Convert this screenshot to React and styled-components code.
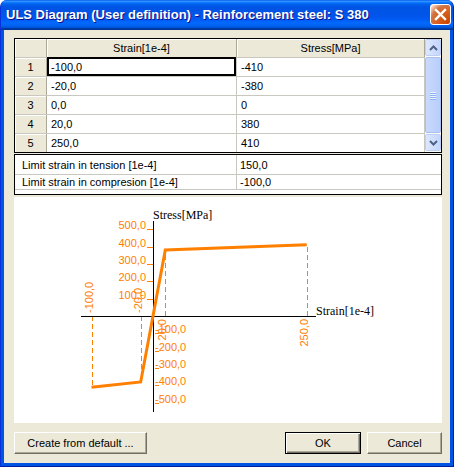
import React from "react";
import styled, { createGlobalStyle } from "styled-components";

const GlobalStyle = createGlobalStyle`
  html, body {
    margin: 0;
    padding: 0;
    background: #ffffff;
  }
  body {
    width: 454px;
    height: 467px;
    overflow: hidden;
    font-family: "Liberation Sans", Arial, sans-serif;
  }
  * {
    box-sizing: border-box;
  }
`;

const rows = [
  { id: 1, strain: "-100,0", stress: "-410" },
  { id: 2, strain: "-20,0", stress: "-380" },
  { id: 3, strain: "0,0", stress: "0" },
  { id: 4, strain: "20,0", stress: "380" },
  { id: 5, strain: "250,0", stress: "410" }
];

const points = [
  [-100, -410],
  [-20, -380],
  [0, 0],
  [20, 380],
  [250, 410]
];

const ORANGE = "#ff8000";
const X0 = 139;
const Y0 = 119;
const SX = 0.615;
const SY = 0.1735;
const px = s => X0 + s * SX;
const py = v => Y0 - v * SY;

const App = () => {
  return (
    <>
      <GlobalStyle />
      <Window>
        <TitleBar>
          <Title>ULS Diagram (User definition) - Reinforcement steel: S 380</Title>
          <CloseButton>
            <svg width="13" height="13" viewBox="0 0 13 13">
              <path d="M2 2 L11 11 M11 2 L2 11" stroke="#fff" strokeWidth="2.4" strokeLinecap="square" />
            </svg>
          </CloseButton>
        </TitleBar>
        <Body>
          <GridFrame>
            <GridTable>
              <GridRow>
                <FixedCell />
                <HeaderCell>Strain[1e-4]</HeaderCell>
                <HeaderCell>Stress[MPa]</HeaderCell>
              </GridRow>
              {rows.map((r, i) => (
                <GridRow key={r.id} last={i === rows.length - 1}>
                  <FixedCell>{r.id}</FixedCell>
                  <DataCell focused={i === 0}>{r.strain}</DataCell>
                  <DataCell>{r.stress}</DataCell>
                </GridRow>
              ))}
            </GridTable>
            <ScrollBar>
              <ScrollButton>
                <svg width="9" height="6" viewBox="0 0 9 6">
                  <polyline points="1,5 4.5,1.5 8,5" fill="none" stroke="#4d6185" strokeWidth="2" />
                </svg>
              </ScrollButton>
              <ScrollThumb>
                <Grip />
                <Grip />
                <Grip />
                <Grip />
              </ScrollThumb>
              <ScrollButton>
                <svg width="9" height="6" viewBox="0 0 9 6">
                  <polyline points="1,1 4.5,4.5 8,1" fill="none" stroke="#4d6185" strokeWidth="2" />
                </svg>
              </ScrollButton>
            </ScrollBar>
          </GridFrame>

          <LimitBox>
            <LimitRow h={19}>
              <LimitLabel>Limit strain in tension [1e-4]</LimitLabel>
              <LimitValue>150,0</LimitValue>
            </LimitRow>
            <LimitRow h={14}>
              <LimitLabel>Limit strain in compresion [1e-4]</LimitLabel>
              <LimitValue>-100,0</LimitValue>
            </LimitRow>
          </LimitBox>

          <ChartArea>
            <svg width="428" height="226" viewBox="0 0 428 226">
              {/* dashed projections */}
              {points
                .filter(p => p[0] !== 0)
                .map(([s, v]) => (
                  <line
                    key={`d${s}`}
                    x1={Math.round(px(s)) + 0.5}
                    y1={Y0}
                    x2={Math.round(px(s)) + 0.5}
                    y2={py(v)}
                    stroke={ORANGE}
                    strokeWidth="1"
                    strokeDasharray="5 3"
                  />
                ))}

              {/* axes */}
              <line x1="67" y1={Y0 + 0.5} x2="302" y2={Y0 + 0.5} stroke="#000" strokeWidth="1" />
              <line x1={X0 + 0.5} y1="24" x2={X0 + 0.5} y2="215" stroke="#000" strokeWidth="1" />
              <AxisText x={X0} y="22">Stress[MPa]</AxisText>
              <AxisText x="302" y="118">Strain[1e-4]</AxisText>

              {/* stress ticks */}
              {[100, 200, 300, 400, 500].map(v => (
                <g key={`p${v}`}>
                  <line
                    x1={X0 - 6}
                    y1={Math.round(py(v)) + 0.5}
                    x2={X0}
                    y2={Math.round(py(v)) + 0.5}
                    stroke={ORANGE}
                  />
                  <TickText x={X0 - 7} y={Math.round(py(v))} textAnchor="end">
                    {`${v},0`}
                  </TickText>
                </g>
              ))}
              {[100, 200, 300, 400, 500].map(v => (
                <g key={`n${v}`}>
                  <line
                    x1={X0 + 2}
                    y1={Math.round(py(-v)) + 0.5}
                    x2={X0 + 6}
                    y2={Math.round(py(-v)) + 0.5}
                    stroke={ORANGE}
                  />
                  <TickText x={X0 + 2} y={Math.round(py(-v))}>
                    {`-${v},0`}
                  </TickText>
                </g>
              ))}

              {/* strain labels */}
              {points
                .filter(p => p[0] !== 0)
                .map(([s]) => (
                  <TickText
                    key={`s${s}`}
                    transform={`translate(${Math.round(px(s)) + 1} ${s < 0 ? Y0 - 3 : Y0 + 3}) rotate(-90)`}
                    textAnchor={s < 0 ? "start" : "end"}
                  >
                    {`${s},0`}
                  </TickText>
                ))}

              {/* diagram */}
              <polyline
                points={points.map(([s, v]) => `${px(s)},${py(v)}`).join(" ")}
                fill="none"
                stroke={ORANGE}
                strokeWidth="3"
              />
            </svg>
          </ChartArea>

          <ButtonBar>
            <Button width={133}>Create from default ...</Button>
            <Spacer />
            <Button width={76} primary>
              OK
            </Button>
            <Button width={75}>Cancel</Button>
          </ButtonBar>
        </Body>
      </Window>
    </>
  );
};

const Window = styled.div`
  width: 454px;
  height: 467px;
  display: flex;
  flex-direction: column;
  background: #0054e3;
  border-left: 1px solid #0831d9;
  border-right: 1px solid #001ea0;
  border-bottom: 1px solid #001ea0;
  border-radius: 7px 7px 0 0;
  overflow: hidden;
`;

const TitleBar = styled.div`
  height: 30px;
  flex: none;
  display: flex;
  align-items: center;
  justify-content: space-between;
  padding: 0 3px 1px 6px;
  margin: 0 -1px;
  background: linear-gradient(
    to bottom,
    #0058ee 0%,
    #3593ff 4%,
    #288eff 6%,
    #127dff 8%,
    #036ffc 10%,
    #0262ee 14%,
    #0057e5 20%,
    #0054e3 24%,
    #0055eb 56%,
    #005bf5 66%,
    #026afe 76%,
    #0062ef 86%,
    #0052d6 92%,
    #0040ab 94%,
    #003092 100%
  );
`;

const Title = styled.span`
  color: #ffffff;
  font-family: "Liberation Sans", Arial, sans-serif;
  font-weight: bold;
  font-size: 13px;
  letter-spacing: 0;
  text-shadow: 1px 1px 0 #0f1089;
  white-space: nowrap;
`;

const CloseButton = styled.div`
  width: 21px;
  height: 21px;
  display: flex;
  align-items: center;
  justify-content: center;
  border: 1px solid #ffffff;
  border-radius: 3px;
  background: radial-gradient(
    circle at 90% 90%,
    #cc4600 0%,
    #dc6527 55%,
    #cd7546 70%,
    #ffccb2 90%,
    #ffffff 100%
  );
`;

const Body = styled.div`
  flex: 1;
  margin: 0 3px 3px;
  background: #ece9d8;
  padding: 8px 8px 9px 10px;
  display: flex;
  flex-direction: column;
  font-family: "Liberation Sans", Arial, sans-serif;
  font-size: 11px;
  color: #000;
`;

const GridFrame = styled.div`
  height: 115px;
  display: flex;
  border: 1px solid #000;
  background: #ffffff;
`;

const GridTable = styled.div`
  flex: 1;
  display: flex;
  flex-direction: column;
`;

const GridRow = styled.div`
  display: grid;
  grid-template-columns: 32px 190px 1fr;
  height: ${p => (p.last ? 18 : 19)}px;
  border-bottom: ${p => (p.last ? "none" : "1px solid #c8c8c0")};
`;

const FixedCell = styled.div`
  background: #ece9d8;
  border-right: 1px solid #aca899;
  display: flex;
  align-items: center;
  justify-content: center;
  box-shadow: inset 1px 1px 0 #ffffff;
`;

const HeaderCell = styled(FixedCell)``;

const DataCell = styled.div`
  display: flex;
  align-items: center;
  padding-left: 4px;
  border-right: 1px solid #c8c8c0;
  box-shadow: ${p => (p.focused ? "inset 0 0 0 2px #000" : "none")};
  margin: ${p => (p.focused ? "-1px 0 0 0" : "0")};
`;

const ScrollBar = styled.div`
  width: 16px;
  display: flex;
  flex-direction: column;
  background: #fbfbf8;
  padding: 0 0 1px;
`;

const ScrollButton = styled.div`
  height: 17px;
  flex: none;
  display: flex;
  align-items: center;
  justify-content: center;
  border: 1px solid #bcd0f7;
  border-radius: 2px;
  background: linear-gradient(to right, #dde8fe, #c4d5fc);
`;

const ScrollThumb = styled.div`
  flex: 1;
  margin: 1px 0;
  display: flex;
  flex-direction: column;
  align-items: center;
  justify-content: center;
  gap: 1px;
  border: 1px solid #a9bff2;
  border-radius: 2px;
  background: linear-gradient(to right, #cad9fd, #b9cefc);
`;

const Grip = styled.div`
  width: 6px;
  height: 1px;
  background: #eef3fe;
  box-shadow: 0 1px 0 #8cb0f8;
`;

const LimitBox = styled.div`
  margin-top: 1px;
  height: 41px;
  border: 1px solid #000;
  background: #ffffff;
`;

const LimitRow = styled.div`
  display: grid;
  grid-template-columns: 222px 1fr;
  height: ${p => p.h + 1}px;
  border-bottom: 1px solid #c8c8c0;
`;

const LimitLabel = styled.div`
  display: flex;
  align-items: center;
  padding-left: 7px;
  border-right: 1px solid #c8c8c0;
`;

const LimitValue = styled.div`
  display: flex;
  align-items: center;
  padding-left: 3px;
`;

const ChartArea = styled.div`
  margin-top: 2px;
  height: 226px;
  background: #ffffff;
  svg {
    display: block;
  }
`;

const AxisText = styled.text`
  font-family: "Liberation Serif", "Times New Roman", serif;
  font-size: 12px;
  fill: #000;
`;

const TickText = styled.text`
  font-family: "Liberation Sans", Arial, sans-serif;
  font-size: 11px;
  fill: ${ORANGE};
`;

const ButtonBar = styled.div`
  margin-top: 9px;
  display: flex;
  gap: 6px;
`;

const Spacer = styled.div`
  flex: 1;
`;

const Button = styled.div`
  width: ${p => p.width}px;
  height: 22px;
  display: flex;
  align-items: center;
  justify-content: center;
  background: #ece9d8;
  border-style: solid;
  border-width: 1px;
  border-color: ${p => (p.primary ? "#000" : "#fff #716f64 #716f64 #fff")};
  box-shadow: ${p =>
    p.primary
      ? "inset 1px 1px 0 #fff, inset -1px -1px 0 #716f64, inset -2px -2px 0 #aca899"
      : "inset -1px -1px 0 #aca899"};
  font-size: 11px;
`;

export default App;
